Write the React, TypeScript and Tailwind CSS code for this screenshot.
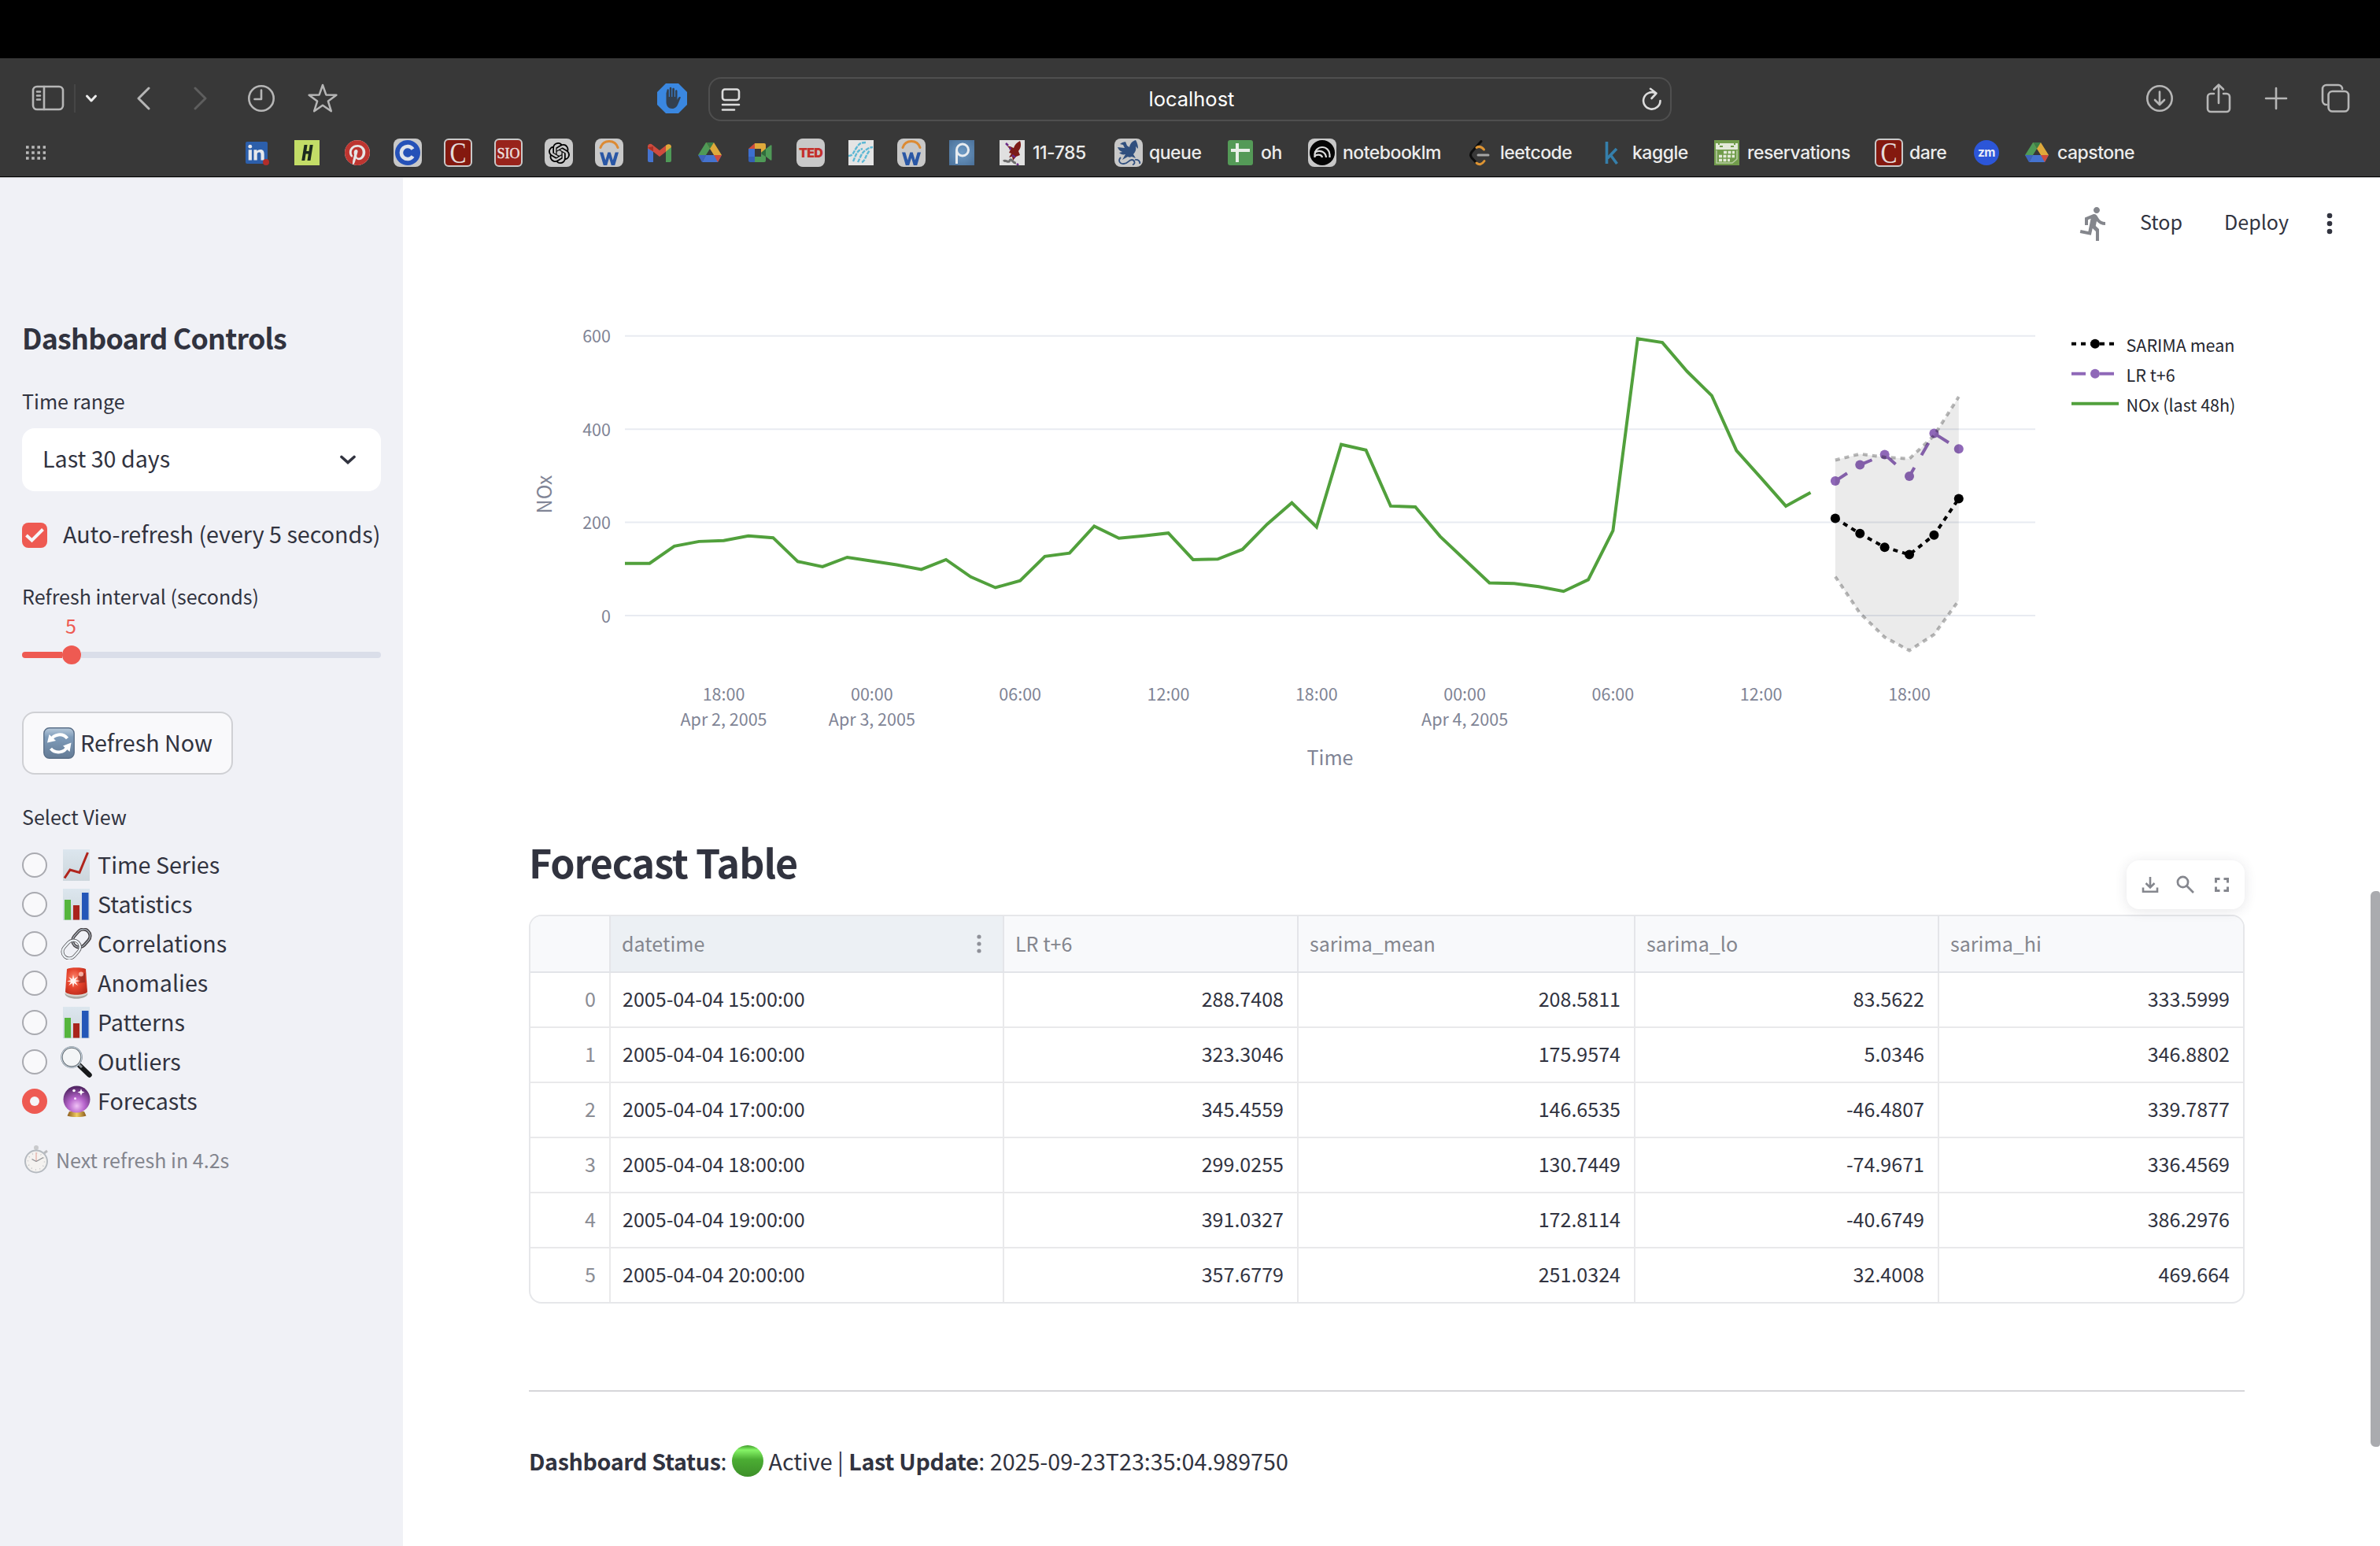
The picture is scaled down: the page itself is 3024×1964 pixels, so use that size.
import React from 'react';
import { SiPinterest, SiOpenai } from 'react-icons/si';
import { MdDirectionsRun } from 'react-icons/md';

type Kids = { children?: React.ReactNode };

/* ---------- browser toolbar ---------- */

const line = { fill: 'none', stroke: '#b6b6b6', strokeWidth: 2.6, strokeLinecap: 'round', strokeLinejoin: 'round' } as const;

function SidebarIcon() {
  return (
    <svg className="h-9 w-11" viewBox="0 0 44 36" {...line}>
      <rect x="3" y="3" width="38" height="29" rx="5" />
      <path d="M17 3v29M8 9.5h4M8 14.5h4M8 19.5h4" />
    </svg>
  );
}

function Toolbar() {
  return (
    <div className="flex h-[102px] items-center">
      <div className="flex w-[900px] items-center pl-[39px]">
        <SidebarIcon />
        <div className="ml-[11px] h-9 w-[2px] bg-[#464646]" />
        <svg className="ml-3 h-4 w-4" viewBox="0 0 16 16" {...line} stroke="#ececec" strokeWidth={3}>
          <path d="M2.5 5 8 11l5.500-6" />
        </svg>
        <svg className="ml-[49px] h-8 w-[18px]" viewBox="0 0 18 32" {...line} strokeWidth={3}>
          <path d="M16 3 3 16l13 13" />
        </svg>
        <svg className="ml-[55px] h-8 w-[18px]" viewBox="0 0 18 32" {...line} strokeWidth={3} stroke="#5e5e5e">
          <path d="M2 3l13 13L2 29" />
        </svg>
        <svg className="ml-[50px] h-9 w-9" viewBox="0 0 36 36" {...line}>
          <circle cx="18" cy="18" r="15.700" />
          <path d="M18 7.500V19H9.500" />
        </svg>
        <svg className="ml-[40px] h-10 w-10" viewBox="0 0 40 40" {...line} strokeWidth={2.500}>
          <path d="M20 3l4.300 12.400 13.100.3-10.500 7.900 3.900 12.600L20 28.700 9.200 36.200l3.900-12.600L2.600 15.700l13.100-.3z" />
        </svg>
        <svg className="ml-[405px] h-[38px] w-[38px]" viewBox="0 0 38 38">
          <path d="M11 0h16l11 11v16L27 38H11L0 27V11z" fill="#3a87e0" />
          <path
            d="M11.500 12.500v11c0 5 3 8.500 7.500 8.500 4 0 6-2.500 7.500-6l3.500-8.500c-2-1.500-3 0-4.500 3.500V9.500c-.3-1.800-2.300-1.800-2.500 0V17h-1V7c-.3-1.800-2.500-1.800-2.700 0v10h-1V6c-.3-1.700-2.300-1.700-2.500 0v11h-1V8.500c-.2-1.600-2.100-1.600-2.300 0z"
            fill="#33404f"
          />
        </svg>
      </div>
      <div className="mt-[2px] flex h-14 w-[1224px] items-center justify-between rounded-2xl border-2 border-[#4f4f4f] pl-[11px] pr-[7px]">
        <svg className="h-8 w-8" viewBox="0 0 32 32" {...line} stroke="#dcdcdc">
          <rect x="5" y="3.500" width="21" height="13.500" rx="3" />
          <path d="M5 23h21M5 29.500h15" />
        </svg>
        <div className="pt-px font-['Inter'] text-[25.500px] text-white">localhost</div>
        <svg className="h-8 w-8" viewBox="0 0 32 32" {...line} stroke="#dcdcdc">
          <path d="M20.500 8.300A10.700 10.700 0 1 0 26.500 18M14 2.800l7.500 5.700-6 6.500" />
        </svg>
      </div>
      <div className="flex items-center pl-[602px]">
        <svg className="h-9 w-9" viewBox="0 0 36 36" {...line}>
          <circle cx="18" cy="18" r="15.700" />
          <path d="M18 9.500v16M12 20l6 6 6-6" />
        </svg>
        <svg className="ml-[39px] h-10 w-9" viewBox="0 0 36 40" {...line}>
          <path d="M12 14H8a4 4 0 0 0-4 4v15a4 4 0 0 0 4 4h20a4 4 0 0 0 4-4V18a4 4 0 0 0-4-4h-4M18 26V3M12 8.500 18 2.600l6 5.900" />
        </svg>
        <svg className="ml-[39px] h-8 w-8" viewBox="0 0 32 32" {...line}>
          <path d="M16 3v26M3 16h26" />
        </svg>
        <svg className="ml-[39px] h-10 w-10" viewBox="0 0 40 40" {...line}>
          <path d="M9 28a5 5 0 0 1-5-5V8a5 5 0 0 1 5-5h15a5 5 0 0 1 5 5" />
          <rect x="11.500" y="11" width="25.500" height="25.500" rx="5" />
        </svg>
      </div>
    </div>
  );
}

function Tile({ className, children }: Kids & { className: string }) {
  return <div className={'flex shrink-0 items-center justify-center ' + className}>{children}</div>;
}

function Drive() {
  return (
    <svg className="h-8 w-8" viewBox="0 0 32 32">
      <path d="M11 3h10L6 27 1 19z" fill="#4f9a57" />
      <path d="M11 3h10l10 16H21z" fill="#dfa93b" />
      <path d="M11 3h10l-5 8z" fill="#3c7f47" />
      <path d="M11 19h20l-5 9H6z" fill="#4573cf" />
      <path d="M21 19h10l-5 9z" fill="#cf4b3d" />
      <path d="M16 12l4.500 7h-9z" fill="#383838" />
      <path d="M6 28l-5-9h10z" fill="#3d63bd" />
    </svg>
  );
}

function Workday() {
  return (
    <Tile className="h-9 w-9 rounded-lg bg-[#c8c8c8]">
      <svg className="h-9 w-9" viewBox="0 0 36 36">
        <path d="M7 11.500C9 5.500 13 3.500 18 3.500s9 2 11 8" fill="none" stroke="#dc8a33" strokeWidth="3" strokeLinecap="round" />
        <path d="M6 17.500h4.300l3 10 3-10h3.400l3 10 3-10H30L25.200 34h-4.400L18 24.500 15.200 34h-4.400z" fill="#2a57a5" />
      </svg>
    </Tile>
  );
}

function Carnegie() {
  return (
    <Tile className="h-9 w-9 rounded-md border-2 border-[#c9c9c9] bg-[#84190f]">
      <svg className="h-8 w-8" viewBox="0 0 32 32">
        <text x="16" y="29" textAnchor="middle" fontSize="38" fill="#e3dcdb" className="font-['Liberation_Serif']" textLength="21" lengthAdjust="spacingAndGlyphs">C</text>
      </svg>
    </Tile>
  );
}

const bookmarks: { w: string; label?: string; icon: React.ReactNode }[] = [
  {
    w: 'w-16',
    icon: (
      <svg className="h-9 w-9" viewBox="0 0 36 36">
        <rect x="4" y="4" width="28" height="28" rx="2" fill="#2c5fab" />
        <g fill="#e6e8ec">
          <circle cx="9.800" cy="10.200" r="2.400" />
          <path d="M7.700 14.200h4.200v13.300H7.700zM14.500 14.200h4v1.900c.8-1.400 2.300-2.200 4.200-2.200 4.200 0 5 2.700 5 6.300v7.300h-4.200v-6.500c0-1.600 0-3.500-2.300-3.500s-2.500 1.700-2.500 3.400v6.600h-4.200z" />
        </g>
        <circle cx="30" cy="30" r="4" fill="#b12d2a" />
      </svg>
    ),
  },
  {
    w: 'w-16',
    icon: (
      <Tile className="h-8 w-8 bg-[#c3dd67]">
        <svg className="h-8 w-8" viewBox="0 0 32 32">
          <path d="M12.500 6h4l-1.200 8h3.200l1.200-8h4L20.500 26h-4l1.300-8.500h-3.200L13.300 26h-4z" fill="#1c2b1f" />
        </svg>
      </Tile>
    ),
  },
  { w: 'w-16', icon: <Tile className="h-8 w-8 rounded-full bg-[#e6e6e6]"><SiPinterest className="h-8 w-8 text-[#bd3530]" /></Tile> },
  {
    w: 'w-16',
    icon: (
      <Tile className="h-9 w-9 rounded-lg bg-[#c8c8c8]">
        <svg className="h-9 w-9" viewBox="0 0 36 36">
          <circle cx="18" cy="18" r="16" fill="#2551b8" />
          <path d="M24.500 13.500a8 8 0 1 0 0 9" fill="none" stroke="#e0e3ea" strokeWidth="4.600" />
        </svg>
      </Tile>
    ),
  },
  { w: 'w-16', icon: <Carnegie /> },
  {
    w: 'w-16',
    icon: (
      <Tile className="h-9 w-9 rounded-md border-2 border-[#c9c9c9] bg-[#98231b]">
        <svg className="h-8 w-8" viewBox="0 0 32 32">
          <text x="16" y="22.500" textAnchor="middle" fontSize="19" fill="#eadfde" stroke="#eadfde" strokeWidth=".5" className="font-['Liberation_Serif']" textLength="29" lengthAdjust="spacingAndGlyphs">SIO</text>
        </svg>
      </Tile>
    ),
  },
  { w: 'w-16', icon: <Tile className="h-9 w-9 rounded-lg bg-[#c8c8c8]"><SiOpenai className="h-[27px] w-[27px] text-black" /></Tile> },
  { w: 'w-16', icon: <Workday /> },
  {
    w: 'w-16',
    icon: (
      <svg className="h-9 w-9" viewBox="0 0 36 36">
        <path d="M3 11v17a2 2 0 0 0 2 2h5V15z" fill="#4573cf" />
        <path d="M33 11v17a2 2 0 0 1-2 2h-5V15z" fill="#4f9a57" />
        <path d="M3 10.500c0-4 4-4.500 6-2.500l9 7 9-7v8l-9 7-8-6.200-7-4z" fill="#cf4b3d" />
        <path d="M3 11.500l7 5V10z" fill="#a93027" />
        <path d="M26 9c2-2.500 7-2.500 7 2l-7 5.500z" fill="#dfa93b" />
      </svg>
    ),
  },
  { w: 'w-16', icon: <Drive /> },
  {
    w: 'w-16',
    icon: (
      <svg className="h-9 w-9" viewBox="0 0 36 36">
        <path d="M3 13l8-7v7z" fill="#cf4b3d" />
        <path d="M11 6h12a2 2 0 0 1 2 2v7l-6 4v-6h-8z" fill="#dfa93b" />
        <path d="M3 13h8v10H3z" fill="#3d6fd0" />
        <path d="M3 23h8v7H5a2 2 0 0 1-2-2z" fill="#3560b5" />
        <path d="M11 23h8v-4l6 4v5a2 2 0 0 1-2 2H11z" fill="#4f9a57" />
        <path d="M19 18l12-9.500c.8-.6 1.500-.2 1.500.8v17.400c0 1-.7 1.400-1.500.8z" fill="#4f9a57" />
        <path d="M19 18l6-5v10z" fill="#2f6d3b" />
      </svg>
    ),
  },
  {
    w: 'w-16',
    icon: (
      <Tile className="h-9 w-9 rounded-lg bg-[#c8c8c8]">
        <span className="font-['Inter'] text-[16px] font-black leading-9 tracking-[-0.800px] text-[#c4302b]">TED</span>
      </Tile>
    ),
  },
  {
    w: 'w-16',
    icon: (
      <Tile className="h-8 w-8 bg-[#e4e4e4]">
        <svg className="h-8 w-8" viewBox="0 0 32 32" fill="none" stroke="#5db8d4" strokeWidth="2.400" strokeDasharray="5 1.200">
          <path d="M0 20c6 0 6-4 10-10s6-7 12-7M6 27c3-6 4-14 12-16M12 28c3-5 4-12 11-16 3-2 5-3 8-3M17 28c4-1 4-7 10-15" />
        </svg>
      </Tile>
    ),
  },
  { w: 'w-16', icon: <Workday /> },
  {
    w: 'w-16',
    icon: (
      <Tile className="h-8 w-8 bg-radial from-[#6f9cc6] to-[#4a7099]">
        <svg className="h-8 w-8" viewBox="0 0 32 32" fill="none" stroke="#e8ecf0" strokeWidth="3">
          <path d="M9.500 30V13" />
          <circle cx="17" cy="12.500" r="7.500" />
        </svg>
      </Tile>
    ),
  },
  {
    w: 'w-[148px]',
    label: '11-785',
    icon: (
      <Tile className="h-8 w-8 bg-[#e0e0e0]">
        <svg className="h-8 w-8" viewBox="0 0 32 32">
          <path d="M26 1c-4 2-7 5-8 9-3-1-5-3-8-2l4 4-2 4 3 1-3 5 4-1 1 5 4-5 5-2-2-5c3-4 4-8 2-13z" fill="#7c1b18" />
          <path d="M8 4l3 3M13 9l1 3M16 19l4 3M22 30l2 2" stroke="#6b2a86" strokeWidth="2.500" />
          <path d="M5 27c3-3 6 3 8-1s4 4 8 3" fill="none" stroke="#6d6d6d" strokeWidth="3" />
        </svg>
      </Tile>
    ),
  },
  {
    w: 'w-[142px]',
    label: 'queue',
    icon: (
      <Tile className="h-9 w-9 rounded-lg bg-[#c8c8c8]">
        <svg className="h-9 w-9" viewBox="0 0 36 36">
          <path d="M27 2c-4 1-7 4-8 9l-3-2-2-5-4 1-3 2 4 1 2 4-9-1c1 3 3 5 6 6l-4 1c2 2 5 3 8 2l-4 7 7-4c1 1 3 1 5 0l5 2-3-5c3-3 4-7 3-10l3 3c0-4-1-8-3-11z" fill="#304f7e" />
          <path d="M8 24c-4 4-1 9 4 8 5 0 6-5 10-5s5 6 1 6M26 27c4-1 7 2 6 5" fill="none" stroke="#304f7e" strokeWidth="1.800" />
        </svg>
      </Tile>
    ),
  },
  {
    w: 'w-[104px]',
    label: 'oh',
    icon: (
      <Tile className="h-8 w-8 rounded-[3px] bg-[#549a57]">
        <svg className="h-8 w-8" viewBox="0 0 32 32">
          <path d="M12 4v24M4 13h24" stroke="#e8efe8" strokeWidth="4" />
        </svg>
      </Tile>
    ),
  },
  {
    w: 'w-[200px]',
    label: 'notebooklm',
    icon: (
      <Tile className="h-9 w-9 rounded-lg bg-[#c8c8c8]">
        <svg className="h-9 w-9" viewBox="0 0 36 36">
          <circle cx="18" cy="18" r="16" fill="#050505" />
          <g fill="none" stroke="#dcdcdc" strokeWidth="2.200">
            <path d="M8.500 24v-3.500a9.500 9.500 0 0 1 19 0V24" />
            <path d="M8.500 17.500c7-4 14 0 14.500 6.500M8.500 22c5-2.500 9-1 9.500 2" />
          </g>
        </svg>
      </Tile>
    ),
  },
  {
    w: 'w-[168px]',
    label: 'leetcode',
    icon: (
      <svg className="h-9 w-9" viewBox="0 0 36 36" fill="none" strokeLinecap="round" strokeWidth="3">
        <path d="M20 3.500 8 17c-2 2.500-2 5 0 7.500l6 6.500" stroke="#0d0d0d" />
        <path d="M14 11.500c3-2 6-1.500 9.500 2.500M14 31c3.500 3 7 2 10-2.500" stroke="#dd9433" />
        <path d="M16 21h13" stroke="#a5a5a5" />
      </svg>
    ),
  },
  {
    w: 'w-[146px]',
    label: 'kaggle',
    icon: (
      <svg className="h-9 w-9" viewBox="0 0 36 36" fill="none" stroke="#357fab" strokeWidth="3.600">
        <path d="M11.500 4v28M24 13 12.500 25M16 20.500 24.500 32" />
      </svg>
    ),
  },
  {
    w: 'w-[206px]',
    label: 'reservations',
    icon: (
      <svg className="h-9 w-9" viewBox="0 0 36 36">
        <rect x="2" y="2" width="32" height="32" fill="#719c4b" />
        <path d="M4 6h28v8H4z" fill="#e4ead9" />
        <path d="M8 3v5M28 3v5M9 10h4M23 10h4" stroke="#719c4b" strokeWidth="2" />
        <path d="M5 15v16h20l6-5V15" fill="none" stroke="#b5cba0" strokeWidth="1.600" />
        <path d="M14 17.500h14M8 22.500h20M8 27.500h14" stroke="#e4ead9" strokeWidth="3.600" strokeDasharray="4 1.500" />
      </svg>
    ),
  },
  { w: 'w-[124px]', label: 'dare', icon: <Carnegie /> },
  {
    w: 'w-16',
    icon: (
      <Tile className="h-8 w-8 rounded-full bg-[#2c56d8]">
        <span className="font-['Inter'] text-[15.500px] font-bold leading-8 tracking-[-0.600px] text-[#e8ecf8]">zm</span>
      </Tile>
    ),
  },
  { w: 'w-[160px]', label: 'capstone', icon: <Drive /> },
];

function Bookmarks() {
  return (
    <div className="flex h-9 items-center">
      <div className="flex w-[308px] pl-[32px]">
        <svg className="h-5 w-[26px]" viewBox="0 0 26 20" stroke="#b9b9b9" strokeWidth="3.600" strokeDasharray="3.600 3.600">
          <path d="M1 3h26M1 10h26M1 17h26" />
        </svg>
      </div>
      {bookmarks.map((b, i) => (
        <div key={i} className={'flex shrink-0 items-center ' + b.w}>
          <div className="flex h-9 w-9 items-center justify-center">{b.icon}</div>
          {b.label && (
            <span className="whitespace-nowrap pl-2 font-['Inter'] text-[23px] font-medium leading-9 tracking-[-0.500px] text-[#ececec]">
              {b.label}
            </span>
          )}
        </div>
      ))}
    </div>
  );
}

/* ---------- emoji drawings ---------- */

function EmojiCard({ children }: Kids) {
  return (
    <svg className="h-10 w-10" viewBox="0 0 40 40">
      <defs>
        <linearGradient id="paper" x1="0" y1="0" x2="0" y2="1">
          <stop offset="0" stopColor="#dce6ee" />
          <stop offset="1" stopColor="#cdd6dc" />
        </linearGradient>
      </defs>
      <rect x="3" y="0" width="34" height="40" fill="url(#paper)" />
      {children}
    </svg>
  );
}

const TrendEmoji = () => (
  <EmojiCard>
    <path d="M5 36.500 12 26l12 3.500L34.500 4" fill="none" stroke="#b0241c" strokeWidth="3" />
  </EmojiCard>
);

const BarsEmoji = () => (
  <EmojiCard>
    <rect x="5" y="14" width="8" height="25.500" fill="#55b53d" />
    <rect x="16" y="21" width="8" height="18.500" fill="#a9241c" />
    <rect x="27" y="5" width="8.500" height="34.500" fill="#2357b8" />
  </EmojiCard>
);

const LinkEmoji = () => (
  <svg className="h-10 w-10" viewBox="0 0 40 40" fill="none">
    <g transform="rotate(-48 20 20)">
      <rect x="17" y="11.500" width="25" height="17" rx="8.500" stroke="#433e40" strokeWidth="4" />
      <rect x="17" y="11.500" width="25" height="17" rx="8.500" stroke="#a9b2bb" strokeWidth="1.300" />
      <rect x="-2" y="11.500" width="25" height="17" rx="8.500" stroke="#5b5a5e" strokeWidth="4" />
      <rect x="-2" y="11.500" width="25" height="17" rx="8.500" stroke="#eef3f7" strokeWidth="2.400" />
    </g>
  </svg>
);

const SirenEmoji = () => (
  <svg className="h-10 w-10" viewBox="0 0 40 40">
    <defs>
      <radialGradient id="siren" cx=".4" cy=".4" r=".7">
        <stop offset="0" stopColor="#ff8a70" />
        <stop offset=".5" stopColor="#e5442d" />
        <stop offset="1" stopColor="#b92a1b" />
      </radialGradient>
    </defs>
    <path d="M5.500 33c0 9 29 9 29 0z" fill="#a9a8a3" />
    <path d="M5.500 31.500c0 7.500 29 7.500 29 0z" fill="#d9d8d2" />
    <path d="M8 2c4-2.500 20-2.500 24 0l2 29c-4 5-24 5-28 0z" fill="url(#siren)" />
    <path d="M22 11l9-4v12l-8 1z" fill="#7d241f" opacity=".55" />
    <path d="M16 9l1.200 5.500 4.800-3-3 4.800 6 .7-6 1.200 3 4.800-4.800-3L16 25.500l-1.200-5.500-4.500 3 2.700-4.500-5-1 5-1.200-2.700-4.300 4.500 2.800z" fill="#fff3ef" />
    <circle cx="26" cy="8.500" r="3" fill="#ffc9bd" opacity=".8" />
  </svg>
);

const MagnifierEmoji = () => (
  <svg className="h-10 w-10" viewBox="0 0 40 40">
    <path d="M25.500 26l12 11.500" stroke="#17191b" strokeWidth="6.500" strokeLinecap="round" transform="translate(-1 -1)" />
    <path d="M22 22l5 5" stroke="#8c9298" strokeWidth="3" />
    <circle cx="14" cy="14" r="12.500" fill="#f3f5f7" stroke="#5f666c" strokeWidth="2.400" />
    <circle cx="14" cy="14" r="12.800" fill="none" stroke="#c4d2de" strokeWidth="1.200" />
  </svg>
);

const CrystalEmoji = () => (
  <svg className="h-10 w-10" viewBox="0 0 40 40">
    <defs>
      <radialGradient id="ball" cx=".5" cy=".75" r=".75">
        <stop offset="0" stopColor="#efc1f5" />
        <stop offset=".4" stopColor="#b765cc" />
        <stop offset="1" stopColor="#4a205c" />
      </radialGradient>
      <linearGradient id="gold">
        <stop offset="0" stopColor="#8a5a1c" />
        <stop offset=".5" stopColor="#f0cd62" />
        <stop offset="1" stopColor="#8a5a1c" />
      </linearGradient>
    </defs>
    <path d="M11 33h19l2.500 5.500c-6 2-18 2-24 0z" fill="url(#gold)" />
    <circle cx="20.500" cy="17.500" r="17" fill="url(#ball)" />
    <path d="M26 4l1.200 3.300L30.500 8.500l-3.300 1.200L26 13l-1.200-3.300L21.500 8.500l3.300-1.200z" fill="#fff" />
    <circle cx="17" cy="6.500" r="1.800" fill="#fff" />
    <circle cx="18.500" cy="16.500" r="1.500" fill="#f6e3fa" />
  </svg>
);

const RefreshEmoji = () => (
  <svg className="h-10 w-10" viewBox="0 0 40 40">
    <defs>
      <linearGradient id="tile" x1="0" y1="0" x2="0" y2="1">
        <stop offset="0" stopColor="#b9cbdc" />
        <stop offset=".3" stopColor="#7f9cba" />
        <stop offset="1" stopColor="#647b95" />
      </linearGradient>
    </defs>
    <rect x=".8" y=".8" width="38.400" height="38.400" rx="7" fill="url(#tile)" stroke="#5a6f88" strokeWidth="1.400" />
    <path d="M9.500 16.500C13 8.500 24.500 6.500 30.500 14" fill="none" stroke="#fff" strokeWidth="4" />
    <path d="M5 19.500 7.500 9l8.500 8z" fill="#fff" />
    <path d="M30.500 24.500C27 32.500 15.500 34 9.500 27" fill="none" stroke="#fff" strokeWidth="4" />
    <path d="M35.500 19.500 33.500 31 25 23.500z" fill="#fff" />
  </svg>
);

const StopwatchEmoji = () => (
  <svg className="h-9 w-8" viewBox="0 0 32 36">
    <circle cx="16" cy="3" r="3" fill="#c9cacc" />
    <path d="M26 10l4-3" stroke="#b9babd" strokeWidth="3" />
    <circle cx="16" cy="20.500" r="14" fill="#f4f2f0" stroke="#b5bac0" strokeWidth="2" />
    <circle cx="16" cy="20.500" r="10.500" fill="none" stroke="#c3c3c5" strokeWidth="1.600" strokeDasharray="1 4.500" />
    <path d="M16 20.500V9" stroke="#e9b9b0" strokeWidth="1.500" />
    <path d="M16 20.500l9-5M16 20.500l-5.500-3" stroke="#8f9094" strokeWidth="1.400" />
  </svg>
);

/* ---------- sidebar ---------- */

const views = [
  { label: 'Time Series', Icon: TrendEmoji },
  { label: 'Statistics', Icon: BarsEmoji },
  { label: 'Correlations', Icon: LinkEmoji },
  { label: 'Anomalies', Icon: SirenEmoji },
  { label: 'Patterns', Icon: BarsEmoji },
  { label: 'Outliers', Icon: MagnifierEmoji },
  { label: 'Forecasts', Icon: CrystalEmoji, on: true },
];

function Sidebar() {
  return (
    <aside className="flex w-[512px] shrink-0 flex-col bg-[#f0f1f6] px-7 pt-[178px] text-[28.660px]">
      <h2 className="text-[35.800px] font-bold leading-[48px] tracking-[-0.800px]">Dashboard Controls</h2>
      <div className="mt-[37px] text-[25.070px] leading-10">Time range</div>
      <div className="mt-[15px] flex h-20 items-center justify-between rounded-2xl bg-white pl-[26px] pr-8">
        <span className="pb-1 leading-10">Last 30 days</span>
        <svg className="h-5 w-5" viewBox="0 0 20 20" fill="none" stroke="#31333f" strokeWidth="3.600" strokeLinecap="round">
          <path d="M2 6.500l8 7 8-7" />
        </svg>
      </div>
      <div className="mt-10 flex h-8 items-center gap-5">
        <div className="flex h-8 w-8 items-center justify-center rounded-lg bg-[#ee5a52]">
          <svg className="h-6 w-6" viewBox="0 0 24 24" fill="none" stroke="#f6f6f9" strokeWidth="4">
            <path d="M1.500 12 8.500 18.500 22.500 4.500" />
          </svg>
        </div>
        <span className="whitespace-nowrap pb-1 leading-8">Auto-refresh (every 5 seconds)</span>
      </div>
      <div className="mt-[41px] text-[25.070px] leading-10">Refresh interval (seconds)</div>
      <div className="mt-[3px] pl-[55px] text-[25.070px] leading-7 text-[#ee5a52]">5</div>
      <div className="mt-3 flex h-6 items-center">
        <div className="h-2 w-[51px] rounded-l-full bg-[#ee5a52]" />
        <div className="h-6 w-6 rounded-full bg-[#ee5a52]" />
        <div className="h-2 grow rounded-r-full bg-[#dadee9]" />
      </div>
      <button className="mt-[60px] flex h-20 w-[268px] items-center gap-[7px] rounded-2xl border-2 border-[#cfd0d4] bg-[#f9f9fb] pl-[25px]">
        <RefreshEmoji />
        <span className="whitespace-nowrap pb-[3px] leading-10">Refresh Now</span>
      </button>
      <div className="mt-[33px] text-[25.070px] leading-10">Select View</div>
      <div className="mt-[17px] flex flex-col">
        {views.map(({ label, Icon, on }) => (
          <div key={label} className="flex h-[50px] items-center">
            {on ? (
              <div className="flex h-8 w-8 items-center justify-center rounded-full bg-[#ee5a52]">
                <div className="h-3 w-3 rounded-full bg-[#f5f5f8]" />
              </div>
            ) : (
              <div className="h-8 w-8 rounded-full border-2 border-[#a9aab0] bg-[#f9f9fb]" />
            )}
            <div className="ml-[17px] mr-[7px] flex">
              <Icon />
            </div>
            <span className="pb-[3px] leading-10">{label}</span>
          </div>
        ))}
      </div>
      <div className="mt-[29px] flex items-center gap-[9px] pl-[2px] text-[25.070px] leading-10 text-[#83858e]">
        <StopwatchEmoji />
        Next refresh in 4.2s
      </div>
    </aside>
  );
}

/* ---------- chart ---------- */

const X0 = 794;
const HOUR = 31.385;
const x = (h: number) => X0 + HOUR * h;
const y = (v: number) => 782 - 0.592 * v;
const nox = [
  112, 112, 149, 159, 161, 171, 167, 116, 105, 125, 117, 109, 99, 120, 83, 60, 75, 127, 134, 192, 166, 171, 177, 120, 121,
  142, 196, 242, 190, 367, 355, 235, 233, 170, 120, 70, 69, 62, 52, 77, 182, 594, 586, 524, 472, 354, 295, 235, 264,
];
const forecast = [
  { t: '15', lr: 288.7408, mean: 208.5811, lo: 83.5622, hi: 333.5999 },
  { t: '16', lr: 323.3046, mean: 175.9574, lo: 5.0346, hi: 346.8802 },
  { t: '17', lr: 345.4559, mean: 146.6535, lo: -46.4807, hi: 339.7877 },
  { t: '18', lr: 299.0255, mean: 130.7449, lo: -74.9671, hi: 336.4569 },
  { t: '19', lr: 391.0327, mean: 172.8114, lo: -40.6749, hi: 386.2976 },
  { t: '20', lr: 357.6779, mean: 251.0324, lo: 32.4008, hi: 469.664 },
];
const pts = (vals: number[], start: number) => vals.map((v, i) => x(start + i) + ',' + y(v)).join(' ');
const ticks = ['18:00', '00:00', '06:00', '12:00', '18:00', '00:00', '06:00', '12:00', '18:00'];
const dates: Record<number, string> = { 0: 'Apr 2, 2005', 1: 'Apr 3, 2005', 5: 'Apr 4, 2005' };

function Chart() {
  const lr = forecast.map((f) => f.lr);
  const mean = forecast.map((f) => f.mean);
  const lo = forecast.map((f) => f.lo);
  const hi = forecast.map((f) => f.hi);
  return (
    <svg className="h-[700px] w-[2180px]" viewBox="672 342 2180 700" fill="none">
      {[0, 200, 400, 600].map((v) => (
        <g key={v}>
          <path d={`M794 ${y(v)}H2586`} stroke="#e8ebf1" strokeWidth="2" />
          <text x="776" y={y(v) + 8.500} textAnchor="end" fontSize="21.500" fill="#808495">{v}</text>
        </g>
      ))}
      <g fill="#808495" textAnchor="middle" fontSize="21.500">
        {ticks.map((t, i) => (
          <text key={i} x={x(4 + 6 * i)} y="890">{t}</text>
        ))}
        {Object.entries(dates).map(([i, d]) => (
          <text key={d} x={x(4 + 6 * Number(i))} y="922">{d}</text>
        ))}
        <text x="1690" y="971.500" fontSize="25.070">Time</text>
        <text transform="translate(700.500 628) rotate(-90)" fontSize="25.070">NOx</text>
      </g>
      <polyline points={pts(nox, 0)} stroke="#51a03c" strokeWidth="4" />
      <polyline points={pts(lr, 49)} stroke="#8f68b8" strokeWidth="4" strokeDasharray="18 18" />
      {lr.map((v, i) => <circle key={i} cx={x(49 + i)} cy={y(v)} r="6" fill="#8f68b8" />)}
      <polygon points={pts(hi, 49) + ' ' + forecast.map((f, i) => x(54 - i) + ',' + y(lo[5 - i])).join(' ')} fill="#000" fillOpacity=".08" />
      <polyline points={pts(hi, 49)} stroke="#000" strokeOpacity=".28" strokeWidth="4" strokeDasharray="6 6" />
      <polyline points={pts(lo, 49)} stroke="#000" strokeOpacity=".28" strokeWidth="4" strokeDasharray="6 6" />
      <polyline points={pts(mean, 49)} stroke="#000" strokeWidth="4" strokeDasharray="6 6" />
      {mean.map((v, i) => <circle key={i} cx={x(49 + i)} cy={y(v)} r="6" fill="#000" />)}
      <path d="M2632 436.700h60" stroke="#000" strokeWidth="4" strokeDasharray="6 6" />
      <circle cx="2662" cy="436.700" r="6" fill="#000" />
      <path d="M2632 474.700h54" stroke="#8f68b8" strokeWidth="4" strokeDasharray="18 18" />
      <circle cx="2662" cy="474.700" r="6" fill="#8f68b8" />
      <path d="M2632 512.700h60" stroke="#51a03c" strokeWidth="4" />
      <g fill="#262730" fontSize="21.500">
        <text x="2701.500" y="447">SARIMA mean</text>
        <text x="2701.500" y="485">LR t+6</text>
        <text x="2701.500" y="523">NOx (last 48h)</text>
      </g>
    </svg>
  );
}

/* ---------- table ---------- */

const cols = 'grid grid-cols-[102px_500px_374px_428px_386px_386px]';

function Table() {
  return (
    <div className="overflow-hidden rounded-2xl border-2 border-[#e6e7ea] text-[25.070px]">
      <div className={cols + ' h-[72px] border-b-2 border-[#e2e4e8] bg-[#f8f9fb] leading-[68px] text-[#84868e]'}>
        <div className="border-r-2 border-[#e4e5e9]" />
        <div className="flex items-start justify-between border-r-2 border-[#e4e5e9] bg-[#ecf0f4] pl-[14px] pr-[27px]">
          datetime
          <svg className="mt-[23px] h-6 w-[6px]" viewBox="0 0 6 24" fill="#8f9199">
            <circle cx="3" cy="3" r="2.600" />
            <circle cx="3" cy="12" r="2.600" />
            <circle cx="3" cy="21" r="2.600" />
          </svg>
        </div>
        {['LR t+6', 'sarima_mean', 'sarima_lo', 'sarima_hi'].map((h) => (
          <div key={h} className="border-r-2 border-[#e4e5e9] pl-[14px] last:border-r-0">{h}</div>
        ))}
      </div>
      {forecast.map((f, i) => (
        <div key={f.t} className={cols + ' h-[70px] border-b-2 border-[#e9e9eb] leading-[64px] last:h-[68px] last:border-b-0'}>
          <div className="border-r-2 border-[#e9e9eb] pr-[17px] text-right text-[#8a8c94]">{i}</div>
          <div className="border-r-2 border-[#e9e9eb] pl-[15px]">{`2005-04-04 ${f.t}:00:00`}</div>
          {[f.lr, f.mean, f.lo, f.hi].map((v, k) => (
            <div key={k} className="border-r-2 border-[#e9e9eb] pr-[17px] text-right last:border-r-0">{v}</div>
          ))}
        </div>
      ))}
    </div>
  );
}

function TableTools() {
  return (
    <div className="absolute right-0 top-[51px] flex h-[62px] w-[150px] items-center justify-between rounded-2xl bg-white px-[17px] shadow-[0_2px_16px_rgba(49,51,63,0.12)]">
      <svg className="h-6 w-6" viewBox="0 0 24 24" fill="none" stroke="#85878e" strokeWidth="2.600">
        <path d="M13 2v13M7.500 10l5.500 5.500L18.500 10M4 15.500v5.200h18v-5.200" />
      </svg>
      <svg className="h-6 w-6" viewBox="0 0 24 24" fill="none" stroke="#85878e" strokeWidth="2.700">
        <circle cx="8.500" cy="8.500" r="6.600" />
        <path d="M13.300 13.300l8.700 8.700" />
      </svg>
      <svg className="h-6 w-6" viewBox="0 0 24 24" fill="none" stroke="#85878e" strokeWidth="3">
        <path d="M4.500 9.500v-5h5M14.500 4.500h5v5M19.500 14.500v5h-5M9.500 19.500h-5v-5" />
      </svg>
    </div>
  );
}

function Main() {
  return (
    <main className="flex grow flex-col">
      <header className="flex h-[116px] items-center justify-end pr-[56px] text-[25.070px]">
        <MdDirectionsRun className="h-12 w-12 text-[#84868c]" />
        <span className="ml-[34px] pb-[4px]">Stop</span>
        <span className="ml-[53px] pb-[4px]">Deploy</span>
        <svg className="ml-[44px] h-7 w-4" viewBox="0 0 16 28" fill="#31333f">
          <circle cx="8" cy="4" r="3.300" />
          <circle cx="8" cy="14" r="3.300" />
          <circle cx="8" cy="24" r="3.300" />
        </svg>
      </header>
      <div className="ml-[160px] flex w-[2180px] flex-col">
        <Chart />
        <div className="relative pb-[33px] pt-[17px]">
          <h2 className="text-[50.100px] font-bold leading-[70px] tracking-[-1.050px]">Forecast Table</h2>
          <TableTools />
        </div>
        <Table />
        <div className="mt-[110px] h-[2px] bg-[#d6d6d9]" />
        <div className="mt-[64px] flex items-center whitespace-pre text-[28.660px] leading-[48px]">
          <b className="tracking-[-0.360px]">Dashboard Status</b>
          <span>:</span>
          <svg className="ml-[7px] mr-[6px] h-10 w-10" viewBox="0 0 40 40">
            <defs>
              <linearGradient id="go" x1="0" y1="0" x2="0" y2="1">
                <stop offset="0" stopColor="#3f9a2a" />
                <stop offset=".15" stopColor="#86f567" />
                <stop offset=".45" stopColor="#4bad33" />
                <stop offset="1" stopColor="#3d8f29" />
              </linearGradient>
            </defs>
            <circle cx="20" cy="20" r="20" fill="url(#go)" />
          </svg>
          <span>Active | </span>
          <b className="tracking-[-0.300px]">Last Update</b>
          <span>: 2025-09-23T23:35:04.989750</span>
        </div>
      </div>
    </main>
  );
}

export default function App() {
  return (
    <div className="flex h-[1964px] w-[3024px] flex-col overflow-hidden bg-white font-['Noto_Sans_CJK_SC','Noto_Sans',sans-serif] text-[#31333f]">
      <div className="h-[74px] shrink-0 bg-black" />
      <div className="h-[151px] shrink-0 border-b border-black bg-[#383838]">
        <Toolbar />
        <Bookmarks />
      </div>
      <div className="h-px shrink-0 bg-[#c0c0c2]" />
      <div className="relative flex grow">
        <Sidebar />
        <Main />
        <div className="absolute right-0 top-[906px] h-[706px] w-3 rounded-l-md rounded-r-sm bg-[#aaabaf]" />
      </div>
    </div>
  );
}
